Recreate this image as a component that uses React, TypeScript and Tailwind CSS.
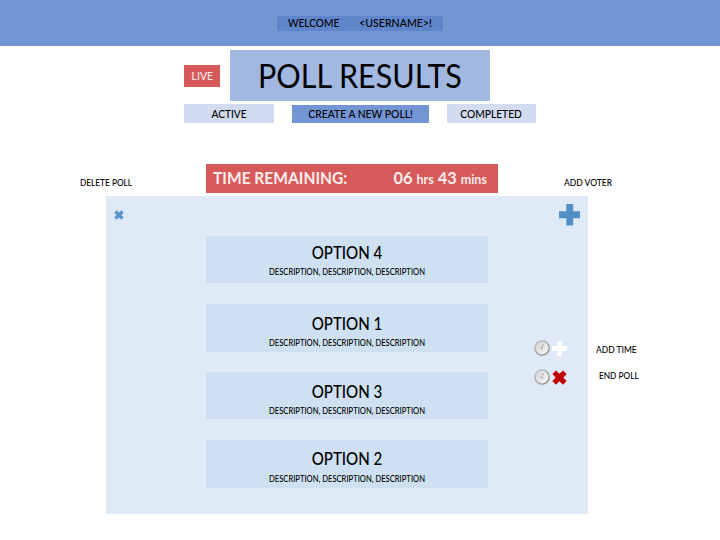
type Option = { name: string; box: string; title: string };

const options: Option[] = [
  { name: "OPTION 4", box: "mt-10 h-[47px] pt-[7px]", title: "mb-1" },
  { name: "OPTION 1", box: "mt-[21px] h-12 pt-[10px]", title: "mb-1" },
  { name: "OPTION 3", box: "mt-5 h-[47px] pt-[10px]", title: "mb-1" },
  { name: "OPTION 2", box: "mt-[21px] h-12 pt-[9px]", title: "mb-[5px]" },
];

function Cross({ className }: { className: string }) {
  return (
    <svg viewBox="0 0 16 16" className={className} fill="currentColor" aria-hidden="true">
      <path d="M4.2 0.4 8 3.9 11.8 0.4 15.6 4.2 12.1 8 15.6 11.8 11.8 15.6 8 12.1 4.2 15.6 0.4 11.8 3.9 8 0.4 4.2Z" />
    </svg>
  );
}

function Plus({ className }: { className: string }) {
  return (
    <svg viewBox="0 0 22 22" className={className} fill="currentColor" aria-hidden="true">
      <path d="M7.5 0h7v7.5H22v7h-7.5V22h-7v-7.5H0v-7h7.5Z" />
    </svg>
  );
}

function Clock({ id }: { id: string }) {
  return (
    <svg viewBox="0 0 16 16" className="size-4" aria-hidden="true">
      <defs>
        <linearGradient id={id} x1="0" y1="0" x2="1" y2="1">
          <stop offset="0" stopColor="#c9c9c9" />
          <stop offset="1" stopColor="#7c7c7c" />
        </linearGradient>
        <linearGradient id={`${id}-face`} x1="0" y1="0" x2="1" y2="1">
          <stop offset="0" stopColor="#d2d2d0" />
          <stop offset="1" stopColor="#fafaf8" />
        </linearGradient>
      </defs>
      <circle cx="8" cy="8" r="7.8" fill={`url(#${id})`} />
      <circle cx="8" cy="8" r="6.5" fill={`url(#${id}-face)`} />
      <path d="M7.8 9.4 9.2 4M7.8 9.4 6.4 7.4" stroke="#a2a2a0" strokeWidth="0.9" fill="none" />
    </svg>
  );
}

export default function App() {
  return (
    <div className="h-[540px] w-[720px] overflow-hidden whitespace-nowrap bg-white font-[Lato,sans-serif] text-black">
      <header className="flex h-[46px] justify-center bg-[#7395d4] pt-4">
        <div className="flex h-[15px] w-[166px] items-start bg-[#5f85cb] pl-[11px] text-[11px] font-medium leading-[14px]">
          <span className="w-[71px]">
            <span className="inline-block origin-left scale-x-[0.92]">WELCOME</span>
          </span>
          <span className="origin-left scale-x-[0.965]">&lt;USERNAME&gt;!</span>
        </div>
      </header>

      <div className="flex items-start pl-[184px] pt-1">
        <div className="mr-[10px] mt-[15px] flex h-[22px] w-9 items-center justify-center bg-[#d75a5a] text-[11px] font-medium text-[#fdecec]">
          <span className="scale-x-[0.95]">LIVE</span>
        </div>
        <h1 className="flex h-[51px] w-[260px] items-center justify-center bg-[#a2b8e1] pt-px text-[32px] leading-none">
          <span className="scale-x-[0.953]">POLL RESULTS</span>
        </h1>
      </div>

      <nav className="mt-[3px] flex h-[19px] pl-[184px] text-[11px] font-medium leading-[19px]">
        <div className="w-[90px] bg-[#d1dcf0] text-center">
          <span className="inline-block scale-x-[0.92]">ACTIVE</span>
        </div>
        <div className="ml-[18px] mt-px h-[18px] w-[137px] bg-[#7395d4] text-center leading-[18px]">
          <span className="inline-block scale-x-[0.94]">CREATE A NEW POLL!</span>
        </div>
        <div className="ml-[18px] w-[89px] bg-[#d1dcf0] text-center">
          <span className="inline-block scale-x-[0.93]">COMPLETED</span>
        </div>
      </nav>

      <div className="mt-[41px] flex h-8 items-start pl-20 text-[9px] font-medium leading-[10px]">
        <span className="mt-[14px] w-[126px]">
          <span className="inline-block origin-left scale-x-[0.92]">DELETE POLL</span>
        </span>
        <div className="flex h-[29px] w-[292px] items-start justify-between bg-[#d75a5a] pl-[7px] pr-[11px] text-[17px] font-bold leading-[28px] text-[#fdecec]">
          <span className="origin-left scale-x-[0.915]">TIME REMAINING:</span>
          <span className="origin-right scale-x-[0.965]">
            06 <small className="text-[13px]">hrs</small> 43 <small className="text-[13px]">mins</small>
          </span>
        </div>
        <span className="ml-[66px] mt-[14px] origin-left scale-x-[0.945]">ADD VOTER</span>
      </div>

      <main className="flex pl-[106px]">
        <section className="flex h-[318px] w-[482px] bg-[#deeaf6]">
          <div className="w-[100px] pl-2 pt-[14px]">
            <Cross className="size-[10px] text-[#5b94c9]" />
          </div>
          <div className="w-[282px]">
            {options.map((o) => (
              <div key={o.name} className={`bg-[#cee0f1] text-center ${o.box}`}>
                <h2 className={`scale-x-[0.915] text-[16.5px] font-medium leading-5 ${o.title}`}>{o.name}</h2>
                <p className="scale-x-[0.895] text-[8.5px] font-medium leading-[11px]">
                  DESCRIPTION, DESCRIPTION, DESCRIPTION
                </p>
              </div>
            ))}
          </div>
          <div className="flex w-[100px] flex-col pt-2">
            <Plus className="ml-[70.5px] size-[21.5px] text-[#528fc7]" />
            <div className="ml-[46px] mt-[114.5px] flex h-4 items-center gap-[2px]">
              <Clock id="clock-add" />
              <Plus className="size-[15px] text-white" />
            </div>
            <div className="ml-[46px] mt-[13px] flex h-4 items-center gap-[2px]">
              <Clock id="clock-end" />
              <Cross className="size-[15px] text-[#c00000]" />
            </div>
          </div>
        </section>
        <aside className="pl-2 pt-[149px] text-[9px] font-medium leading-[10px]">
          <div className="origin-left scale-x-[0.94]">ADD TIME</div>
          <div className="ml-[3px] mt-4 origin-left scale-x-[0.92]">END POLL</div>
        </aside>
      </main>
    </div>
  );
}
